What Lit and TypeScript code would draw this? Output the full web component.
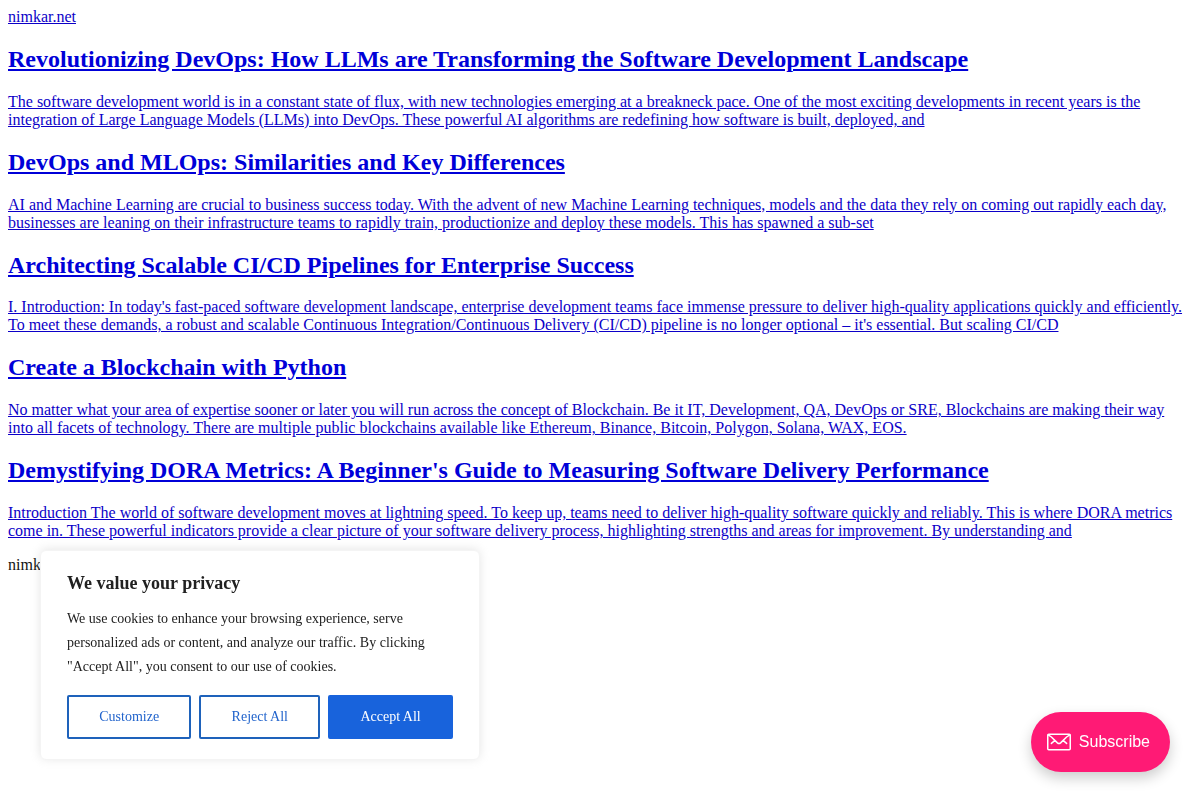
import { LitElement, html, css } from "lit";
import { customElement } from "lit/decorators.js";

interface Post {
  title: string;
  excerpt: string;
}

const posts: Post[] = [
  {
    title: "Revolutionizing DevOps: How LLMs are Transforming the Software Development Landscape",
    excerpt:
      "The software development world is in a constant state of flux, with new technologies emerging at a breakneck pace. One of the most exciting developments in recent years is the integration of Large Language Models (LLMs) into DevOps. These powerful AI algorithms are redefining how software is built, deployed, and",
  },
  {
    title: "DevOps and MLOps: Similarities and Key Differences",
    excerpt:
      "AI and Machine Learning are crucial to business success today. With the advent of new Machine Learning techniques, models and the data they rely on coming out rapidly each day, businesses are leaning on their infrastructure teams to rapidly train, productionize and deploy these models. This has spawned a sub-set",
  },
  {
    title: "Architecting Scalable CI/CD Pipelines for Enterprise Success",
    excerpt:
      "I. Introduction: In today's fast-paced software development landscape, enterprise development teams face immense pressure to deliver high-quality applications quickly and efficiently. To meet these demands, a robust and scalable Continuous Integration/Continuous Delivery (CI/CD) pipeline is no longer optional – it's essential. But scaling CI/CD",
  },
  {
    title: "Create a Blockchain with Python",
    excerpt:
      "No matter what your area of expertise sooner or later you will run across the concept of Blockchain. Be it IT, Development, QA, DevOps or SRE, Blockchains are making their way into all facets of technology. There are multiple public blockchains available like Ethereum, Binance, Bitcoin, Polygon, Solana, WAX, EOS.",
  },
  {
    title: "Demystifying DORA Metrics: A Beginner's Guide to Measuring Software Delivery Performance",
    excerpt:
      "Introduction The world of software development moves at lightning speed. To keep up, teams need to deliver high-quality software quickly and reliably. This is where DORA metrics come in. These powerful indicators provide a clear picture of your software delivery process, highlighting strengths and areas for improvement. By understanding and",
  },
];

@customElement("cookie-banner")
export class CookieBanner extends LitElement {
  static styles = css`
    :host {
      position: fixed;
      left: 40px;
      bottom: 40px;
      width: 440px;
      max-width: calc(100vw - 80px);
      box-sizing: border-box;
      padding: 20px 26px;
      background: #fff;
      border: 1px solid #f4f4f4;
      border-radius: 6px;
      box-shadow: 0 -1px 10px 0 #acabab4d;
      color: #212121;
      z-index: 10;
    }
    .title {
      margin: 0 0 12px;
      font-size: 18px;
      line-height: 24px;
      font-weight: 700;
    }
    .text {
      margin: 0;
      font-size: 14px;
      line-height: 24px;
    }
    .actions {
      display: flex;
      gap: 8px;
      margin-top: 16px;
    }
    .button {
      flex: auto;
      padding: 8px 27px;
      border: 2px solid #1e62bb;
      border-radius: 2px;
      background: transparent;
      color: #2264cc;
      font: inherit;
      font-size: 14px;
      line-height: 24px;
      white-space: nowrap;
      cursor: pointer;
    }
    .accept {
      border-color: #1863dc;
      background: #1863dc;
      color: #fff;
    }
  `;

  render() {
    return html`
      <p class="title">We value your privacy</p>
      <p class="text">
        We use cookies to enhance your browsing experience, serve personalized ads or content, and
        analyze our traffic. By clicking "Accept All", you consent to our use of cookies.
      </p>
      <div class="actions">
        <button class="button" type="button">Customize</button>
        <button class="button" type="button">Reject All</button>
        <button class="button accept" type="button">Accept All</button>
      </div>
    `;
  }
}

@customElement("subscribe-button")
export class SubscribeButton extends LitElement {
  static styles = css`
    :host {
      position: fixed;
      right: 30px;
      bottom: 28px;
      z-index: 10;
    }
    .subscribe {
      display: flex;
      align-items: center;
      gap: 8px;
      height: 60px;
      padding: 0 20px 0 16px;
      border: 0;
      border-radius: 30px;
      background: #ff1a75;
      box-shadow: 0 6px 14px rgba(0, 0, 0, 0.2);
      color: #fff;
      font-family: "Liberation Sans", Arial, sans-serif;
      font-size: 16px;
      cursor: pointer;
    }
    .icon {
      display: block;
    }
  `;

  render() {
    return html`
      <button class="subscribe" type="button">
        <svg class="icon" width="24" height="24" viewBox="0 0 24 24" fill="none" stroke="#fff"
          stroke-width="1.5" stroke-linecap="round" stroke-linejoin="round" aria-hidden="true">
          <rect x="0.75" y="4.25" width="22.5" height="15.5" rx="1" />
          <path d="M1.2 4.8 4.4 7 10.4 12.9Q12 14.2 13.6 12.9L19.6 7 22.8 4.8M4.4 13.4 8 10.4M19.6 13.4 16 10.4" />
        </svg>
        <span>Subscribe</span>
      </button>
    `;
  }
}

@customElement("app-root")
export class AppRoot extends LitElement {
  static styles = css`
    :host {
      display: block;
      padding: 8px;
      font-family: "Liberation Serif", "Times New Roman", serif;
      font-size: 16px;
      color: #111;
    }
    .link {
      color: #0c00c8;
      text-decoration: underline;
    }
    .post {
      text-decoration: none;
    }
    .heading {
      color: #0000d8;
      text-decoration: underline;
    }
    .excerpt {
      text-decoration: underline;
    }
  `;

  render() {
    return html`
      <header><a class="link" href="#">nimkar.net</a></header>
      <main>
        ${posts.map(
          (post) => html`
            <article>
              <a class="link post" href="#">
                <h2 class="heading">${post.title}</h2>
                <p class="excerpt">${post.excerpt}</p>
              </a>
            </article>
          `
        )}
      </main>
      <footer>nimkar.net</footer>
      <cookie-banner></cookie-banner>
      <subscribe-button></subscribe-button>
    `;
  }
}
